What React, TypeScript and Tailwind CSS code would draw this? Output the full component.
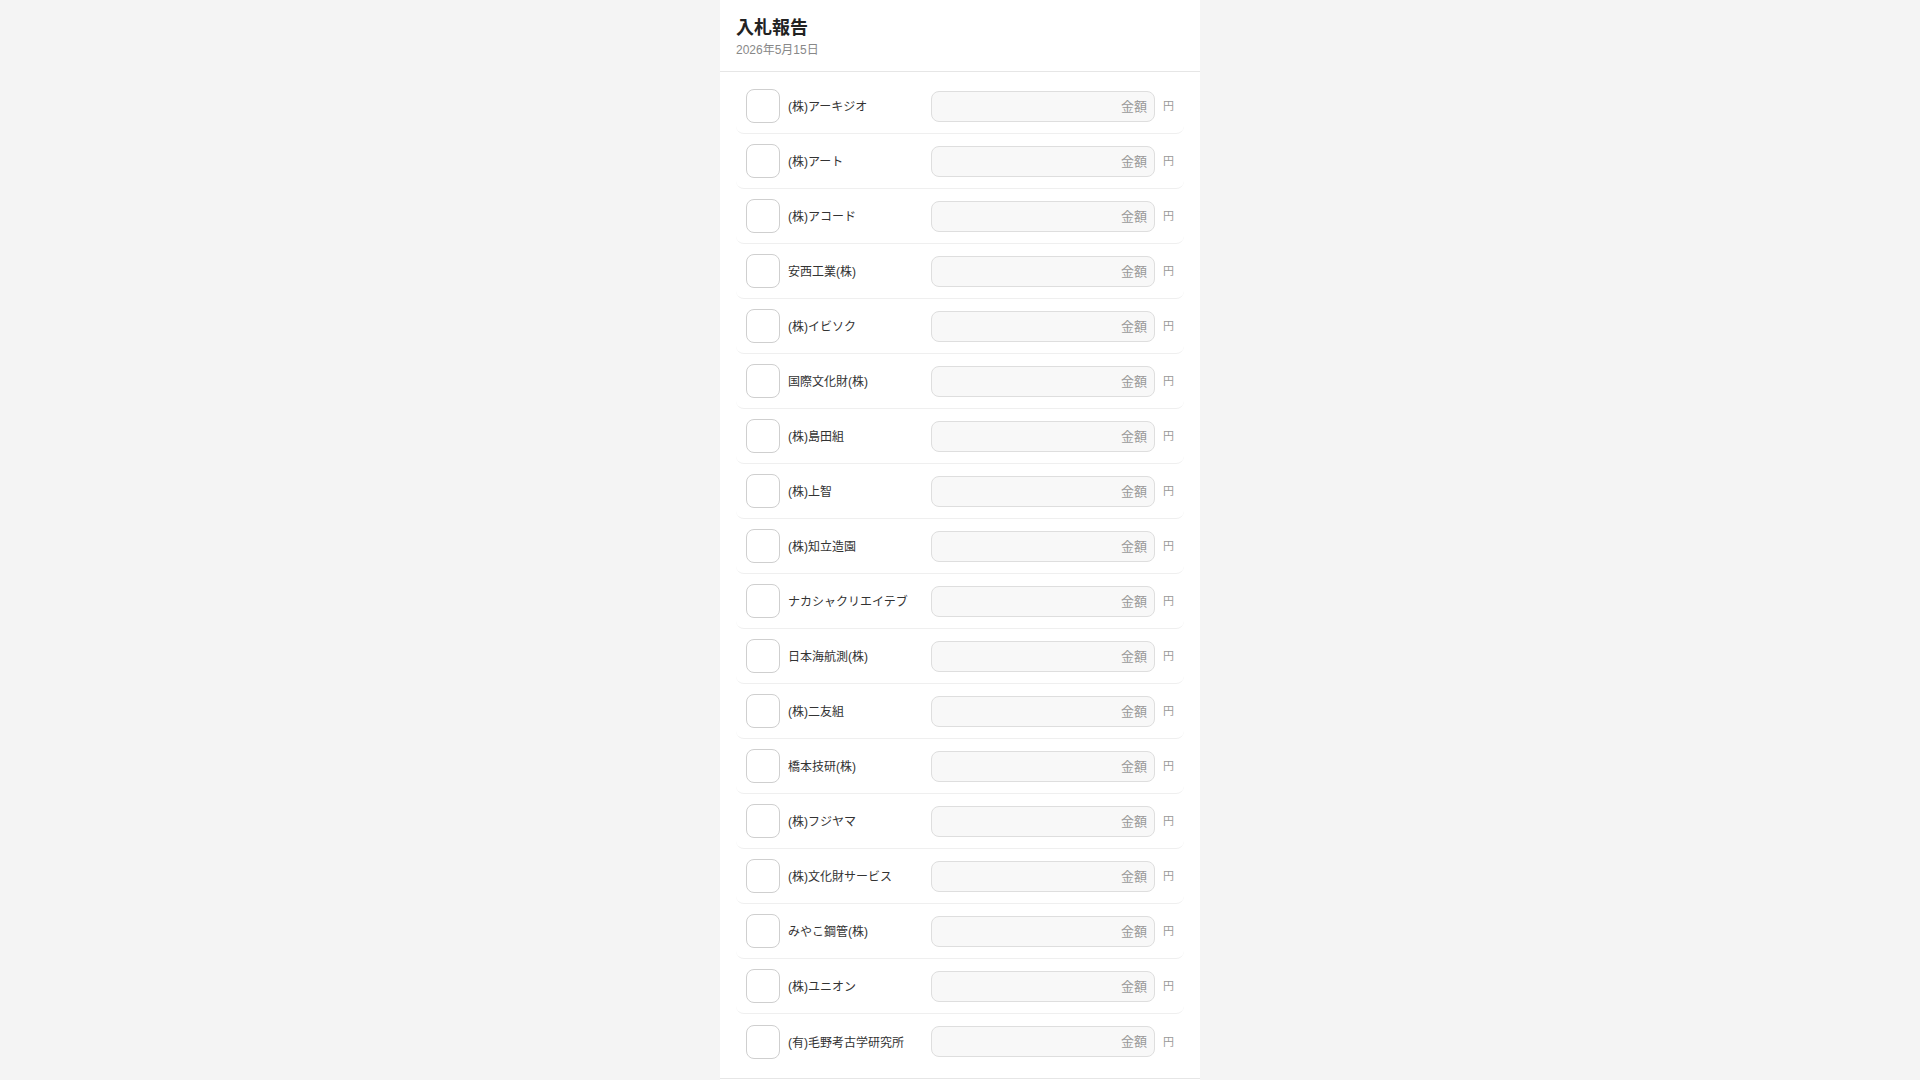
import React from "react";

const companies = [
  "(株)アーキジオ",
  "(株)アート",
  "(株)アコード",
  "安西工業(株)",
  "(株)イビソク",
  "国際文化財(株)",
  "(株)島田組",
  "(株)上智",
  "(株)知立造園",
  "ナカシャクリエイテブ",
  "日本海航測(株)",
  "(株)二友組",
  "橋本技研(株)",
  "(株)フジヤマ",
  "(株)文化財サービス",
  "みやこ鋼管(株)",
  "(株)ユニオン",
  "(有)毛野考古学研究所",
];

export default function App() {
  return (
    <div
      className="min-h-screen bg-[#f4f4f4] text-[#222]"
      style={{ fontFamily: '"Liberation Sans", "Noto Sans CJK JP", sans-serif' }}
    >
      <div className="mx-auto w-[480px] min-h-screen bg-white">
        <header className="border-b border-[#e6e6e6] px-4 pt-[16px] pb-[12px]">
          <h1 className="text-[18px] font-bold leading-[24px] text-[#222]">入札報告</h1>
          <p className="mt-[2px] text-[12px] leading-[17px] text-[#888]">2026年5月15日</p>
        </header>
        <div className="px-4 pt-[7px] pb-[9px]">
          {companies.map((name, i) => (
            <div
              key={name}
              className={
                "flex h-[55px] items-center gap-2 rounded-lg pl-[10px] pr-[9px] " +
                (i === companies.length - 1 ? "" : "border-b border-[#efefef]")
              }
            >
              <button
                type="button"
                className="h-[34px] w-[34px] shrink-0 rounded-[8px] border border-[#cfcfcf] bg-white"
              />
              <span className="w-[135px] shrink-0 truncate pt-[2px] text-[12px] leading-[16px] text-[#333]">
                {name}
              </span>
              <input
                type="text"
                placeholder="金額"
                className="h-[31px] min-w-0 flex-1 rounded-[8px] border border-[#dedede] bg-[#f8f8f8] pl-[9px] pr-[7px] text-right text-[13px] text-[#333] outline-none placeholder:text-[#999]"
              />
              <span className="w-[12px] shrink-0 text-[11px] leading-[14px] text-[#999]">円</span>
            </div>
          ))}
        </div>
        <div className="h-[80px] border-t border-[#e6e6e6] bg-white" />
      </div>
    </div>
  );
}
